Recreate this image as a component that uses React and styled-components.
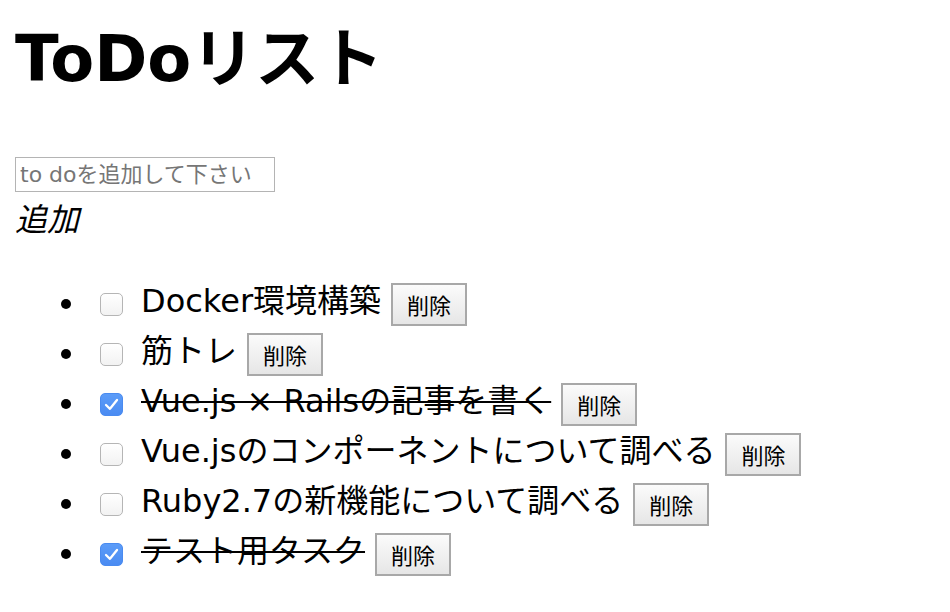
import React, { useState } from "react";
import styled, { createGlobalStyle } from "styled-components";

const GlobalStyle = createGlobalStyle`
  html, body {
    margin: 0;
    padding: 0;
    background: #ffffff;
  }
  body {
    font-family: "DejaVu Sans", "Noto Sans CJK JP", sans-serif;
    color: #000000;
  }
`;

const Page = styled.div`
  padding: 27px 15px 0;
`;

const Title = styled.h1`
  margin: 0;
  font-size: 64px;
  line-height: 64px;
  font-weight: 700;
  letter-spacing: 0;
`;

const TodoInput = styled.input`
  display: block;
  box-sizing: border-box;
  margin: 66px 0 0;
  width: 260px;
  height: 35px;
  padding: 0 4px;
  border: 1px solid #b4b4b4;
  border-radius: 0;
  font-family: "DejaVu Sans", "Noto Sans CJK JP", sans-serif;
  font-size: 22px;
  color: #000;
  outline: none;
  &::placeholder {
    color: #767676;
  }
`;

const AddButton = styled.button`
  display: block;
  margin: 12px 0 0;
  padding: 0;
  border: none;
  background: none;
  font-family: "DejaVu Sans", "Noto Sans CJK JP", sans-serif;
  font-size: 32px;
  line-height: 32px;
  font-style: italic;
  color: #000;
  cursor: pointer;
`;

const List = styled.ul`
  margin: 43px 0 0;
  padding: 0;
  list-style: none;
`;

const Item = styled.li`
  display: flex;
  align-items: center;
  height: 50px;
`;

const Bullet = styled.span`
  flex: none;
  width: 10px;
  height: 10px;
  border-radius: 50%;
  background: #000;
  margin-left: 46px;
  margin-right: 29px;
`;

const Check = styled.span`
  flex: none;
  box-sizing: border-box;
  width: 23px;
  height: 23px;
  border-radius: 5px;
  margin-right: 18px;
  display: flex;
  align-items: center;
  justify-content: center;
  cursor: pointer;
  border: 1px solid ${(p) => (p.$checked ? "#4a8bf0" : "#b5b5b5")};
  background: ${(p) =>
    p.$checked
      ? "linear-gradient(#5c9cf8, #4a8bf2)"
      : "linear-gradient(#ffffff, #f2f2f2)"};
`;

const Label = styled.span`
  font-size: 32px;
  line-height: 32px;
  padding-bottom: 7px;
  white-space: nowrap;
  text-decoration: ${(p) => (p.$done ? "line-through" : "none")};
  text-decoration-thickness: 2px;
`;

const DeleteButton = styled.button`
  flex: none;
  box-sizing: border-box;
  margin-left: 10px;
  width: 76px;
  height: 43px;
  padding: 0;
  border: 2px solid #a8a8a8;
  border-radius: 0;
  background: linear-gradient(#fbfbfb, #e6e6e6);
  font-family: "DejaVu Sans", "Noto Sans CJK JP", sans-serif;
  font-size: 22px;
  color: #000;
  cursor: pointer;
`;

const initial = [
  { id: 1, text: "Docker環境構築", done: false },
  { id: 2, text: "筋トレ", done: false },
  { id: 3, text: "Vue.js × Railsの記事を書く", done: true },
  { id: 4, text: "Vue.jsのコンポーネントについて調べる", done: false },
  { id: 5, text: "Ruby2.7の新機能について調べる", done: false },
  { id: 6, text: "テスト用タスク", done: true },
];

export default function App() {
  const [todos, setTodos] = useState(initial);
  const [text, setText] = useState("");

  const toggle = (id) =>
    setTodos((t) => t.map((x) => (x.id === id ? { ...x, done: !x.done } : x)));
  const remove = (id) => setTodos((t) => t.filter((x) => x.id !== id));
  const add = () => {
    if (!text.trim()) return;
    setTodos((t) => [...t, { id: Date.now(), text, done: false }]);
    setText("");
  };

  return (
    <Page>
      <GlobalStyle />
      <Title>ToDoリスト</Title>
      <TodoInput
        placeholder="to doを追加して下さい"
        value={text}
        onChange={(e) => setText(e.target.value)}
      />
      <AddButton onClick={add}>追加</AddButton>
      <List>
        {todos.map((todo) => (
          <Item key={todo.id}>
            <Bullet />
            <Check
              role="checkbox"
              aria-checked={todo.done}
              $checked={todo.done}
              onClick={() => toggle(todo.id)}
            >
              {todo.done && (
                <svg width="17" height="17" viewBox="0 0 17 17">
                  <path
                    d="M3 9 L7 12.8 L14 4"
                    fill="none"
                    stroke="#ffffff"
                    strokeWidth="2.3"
                    strokeLinecap="round"
                    strokeLinejoin="round"
                  />
                </svg>
              )}
            </Check>
            <Label $done={todo.done}>{todo.text}</Label>
            <DeleteButton onClick={() => remove(todo.id)}>削除</DeleteButton>
          </Item>
        ))}
      </List>
    </Page>
  );
}
